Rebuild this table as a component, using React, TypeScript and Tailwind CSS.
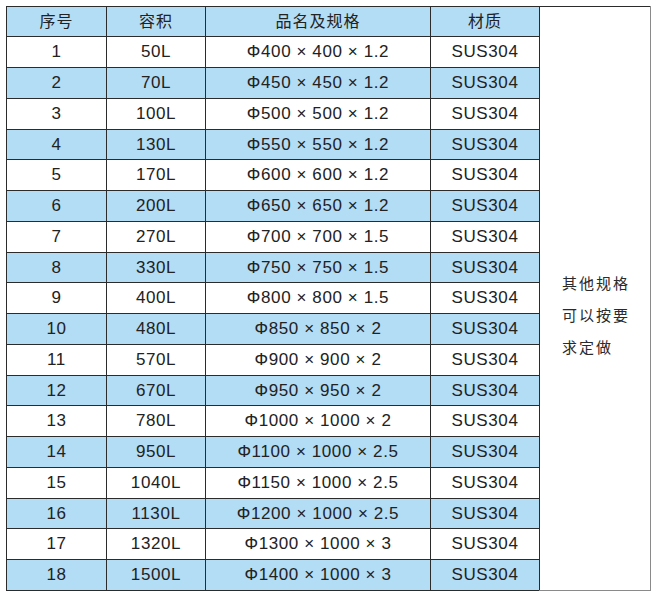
import React from 'react';

const rows: [string, string, string][] = [
  ['1', '50L', 'Φ400 × 400 × 1.2'],
  ['2', '70L', 'Φ450 × 450 × 1.2'],
  ['3', '100L', 'Φ500 × 500 × 1.2'],
  ['4', '130L', 'Φ550 × 550 × 1.2'],
  ['5', '170L', 'Φ600 × 600 × 1.2'],
  ['6', '200L', 'Φ650 × 650 × 1.2'],
  ['7', '270L', 'Φ700 × 700 × 1.5'],
  ['8', '330L', 'Φ750 × 750 × 1.5'],
  ['9', '400L', 'Φ800 × 800 × 1.5'],
  ['10', '480L', 'Φ850 × 850 × 2'],
  ['11', '570L', 'Φ900 × 900 × 2'],
  ['12', '670L', 'Φ950 × 950 × 2'],
  ['13', '780L', 'Φ1000 × 1000 × 2'],
  ['14', '950L', 'Φ1100 × 1000 × 2.5'],
  ['15', '1040L', 'Φ1150 × 1000 × 2.5'],
  ['16', '1130L', 'Φ1200 × 1000 × 2.5'],
  ['17', '1320L', 'Φ1300 × 1000 × 3'],
  ['18', '1500L', 'Φ1400 × 1000 × 3'],
];

const cell = 'border border-[#2b2b2b] text-center align-middle p-0';

export default function App() {
  return (
    <div className="w-[657px] h-[597px] bg-white pt-[6px] pl-[6px] text-[#222] font-['Liberation_Sans','Noto_Sans_CJK_SC',sans-serif]">
      <table className="border-collapse table-fixed w-[644px]">
        <colgroup>
          <col className="w-[100px]" />
          <col className="w-[99px]" />
          <col className="w-[225px]" />
          <col className="w-[109px]" />
          <col className="w-[111px]" />
        </colgroup>
        <tbody>
          <tr className="h-[30px] text-[16px] tracking-[1px]">
            <td className={`${cell} bg-[#b3dcf5]`}>序号</td>
            <td className={`${cell} bg-[#b3dcf5]`}>容积</td>
            <td className={`${cell} bg-[#b3dcf5]`}>品名及规格</td>
            <td className={`${cell} bg-[#b3dcf5]`}>材质</td>
            <td
              rowSpan={19}
              className="border border-[#2b2b2b] border-r-[#8a8a8a] border-b-[#8a8a8a] align-middle pl-[22px] pt-[34px] bg-white"
            >
              <div className="flex flex-col text-[15px] tracking-[2px] leading-[32px] text-[#2a2a2a]">
                <span>其他规格</span>
                <span>可以按要</span>
                <span>求定做</span>
              </div>
            </td>
          </tr>
          {rows.map(([no, vol, spec], i) => (
            <tr
              key={no}
              className={`${i % 4 === 3 ? 'h-[30px]' : 'h-[31px]'} ${i % 2 === 1 ? 'bg-[#b3dcf5]' : 'bg-white'} text-[17px] tracking-[0.6px]`}
            >
              <td className={cell}>{no}</td>
              <td className={cell}>{vol}</td>
              <td className={cell}>{spec}</td>
              <td className={cell}>SUS304</td>
            </tr>
          ))}
        </tbody>
      </table>
    </div>
  );
}
